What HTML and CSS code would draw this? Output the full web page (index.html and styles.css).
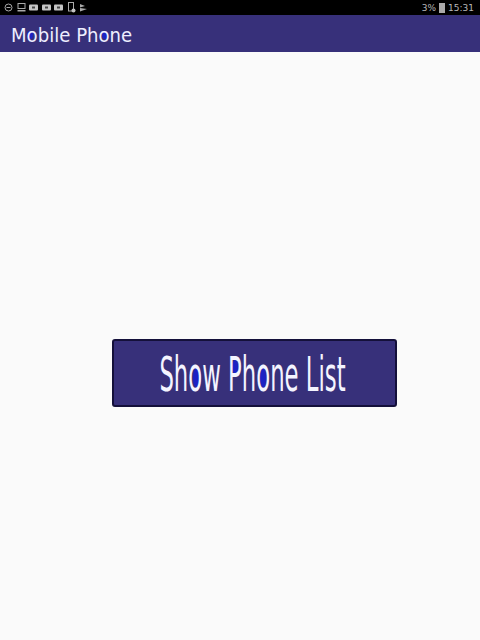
FILE: index.html
```html
<!DOCTYPE html>
<html lang="en">
<head>
    <meta charset="UTF-8">
    <meta name="viewport" content="width=device-width, initial-scale=1.0">
    <title>Mobile Phone</title>
    <link rel="stylesheet" href="styles.css">
</head>
<body>
    <div class="status-bar">
        <div class="status-icons">
            <svg class="icon" width="9" height="9" viewBox="0 0 9 9"><circle cx="4.5" cy="4.5" r="3.5" fill="none" stroke="#aaa" stroke-width="1"/><rect x="2.5" y="4" width="4" height="1" fill="#aaa"/></svg>
            <svg class="icon" width="9" height="9" viewBox="0 0 9 9"><rect x="1" y="0.5" width="7" height="5" fill="none" stroke="#aaa"/><rect x="0.5" y="7" width="8" height="1.5" fill="#aaa"/></svg>
            <svg class="icon" width="9" height="9" viewBox="0 0 9 9"><rect x="0" y="1.5" width="9" height="6" rx="1" fill="#c4c4c4"/><rect x="3" y="3.5" width="3" height="2" fill="#444"/></svg>
            <svg class="icon" width="9" height="9" viewBox="0 0 9 9"><rect x="0" y="1.5" width="9" height="6" rx="1" fill="#c4c4c4"/><rect x="3" y="3.5" width="3" height="2" fill="#444"/></svg>
            <svg class="icon" width="9" height="9" viewBox="0 0 9 9"><rect x="0" y="1.5" width="9" height="6" rx="1" fill="#c4c4c4"/><rect x="3" y="3.5" width="3" height="2" fill="#444"/></svg>
            <svg class="icon" width="9" height="11" viewBox="0 0 9 11"><rect x="1.5" y="0.5" width="5" height="8.5" fill="none" stroke="#aaa"/><circle cx="6.5" cy="8.5" r="2" fill="#c4c4c4"/></svg>
            <svg class="icon" width="9" height="9" viewBox="0 0 9 9"><path d="M1 1 L6 3 L1 4.5 Z M1 5 L8 6 L1 8.5 Z" fill="#aaa"/></svg>
        </div>
        <div class="status-right">
            <span>3%</span>
            <span class="battery"></span>
            <span>15:31</span>
        </div>
    </div>
    <div class="app-bar">
        <span class="dot title-dot-1"></span>
        <span class="dot title-dot-2"></span>
        <span class="app-title">Mobile Phone</span>
    </div>
    <div class="content">
        <button class="show-btn">
            <span class="dot btn-dot-1"></span>
            <span class="dot btn-dot-2"></span>
            <span class="dot btn-dot-3"></span>
            <span class="show-label">Show Phone List</span>
        </button>
    </div>
</body>
</html>
```

FILE: styles.css
```css
html, body { height: 100%; }
body { margin: 0; display: flex; flex-direction: column; background-color: #fafafa; font-family: "DejaVu Sans", sans-serif; overflow: hidden; }

.status-bar { display: flex; justify-content: space-between; align-items: center; height: 15px; padding: 0 6px 0 4px; background-color: #000; color: #b8b8b8; font-size: 9px; }
.status-icons { display: flex; align-items: center; gap: 3.5px; }
.icon { display: block; }
.status-right { display: flex; align-items: center; gap: 3px; }
.battery { width: 6px; height: 10px; background-color: #aaa; }

.app-bar { position: relative; height: 37px; padding-left: 11px; background-color: #37307a; color: #eeeeff; font-size: 19px; line-height: 41px; }
.app-title { position: relative; display: inline-block; transform: scaleX(0.953); transform-origin: left center; white-space: nowrap; }

.content { flex: 1; padding: 287px 0 0 112px; }
.show-btn { position: relative; display: flex; justify-content: center; align-items: center; width: 285px; height: 68px; padding: 3px 4px 0 0; background-color: #37307a; border: 2px solid #14103a; border-radius: 3px; color: #f4f4ff; font-family: "DejaVu Sans", sans-serif; font-size: 28px; }
.show-label { position: relative; display: block; transform: scale(0.813, 1.7); white-space: nowrap; }

/* blue fill inside some letter counters */
.dot { position: absolute; background-color: #1c22c4; border-radius: 50%; }
.btn-dot-1 { left: 79px; top: 26px; width: 8px; height: 21px; }
.btn-dot-2 { left: 118px; top: 19px; width: 6px; height: 14px; }
.btn-dot-3 { left: 146px; top: 27px; width: 6px; height: 20px; }
.title-dot-1 { left: 27px; top: 16px; width: 6px; height: 8px; }
.title-dot-2 { left: 102px; top: 16px; width: 6px; height: 8px; }
```
